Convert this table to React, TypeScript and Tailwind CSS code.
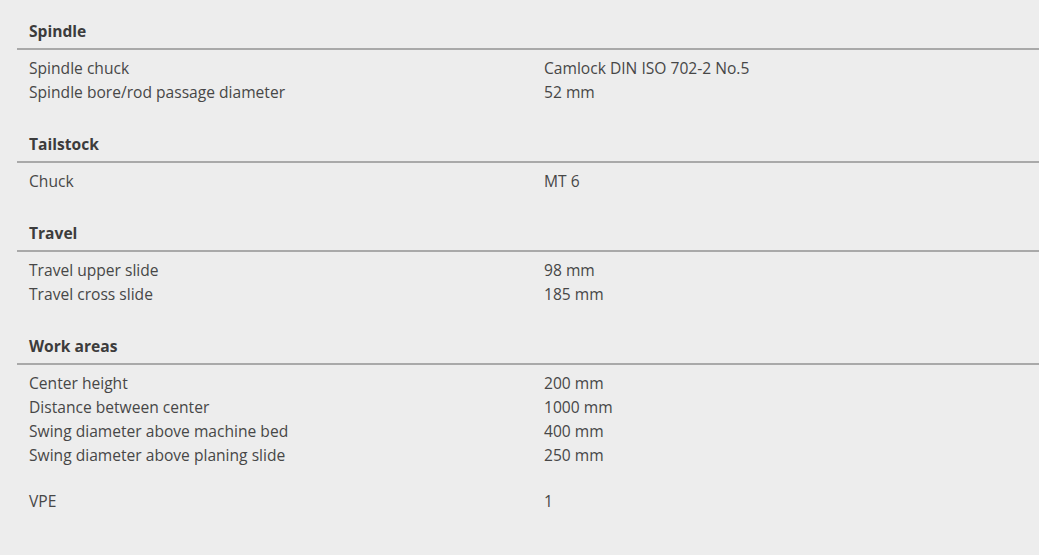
const groups: { title: string; rows: [string, string][] }[] = [
  {
    title: "Spindle",
    rows: [
      ["Spindle chuck", "Camlock DIN ISO 702-2 No.5"],
      ["Spindle bore/rod passage diameter", "52 mm"],
    ],
  },
  { title: "Tailstock", rows: [["Chuck", "MT 6"]] },
  {
    title: "Travel",
    rows: [
      ["Travel upper slide", "98 mm"],
      ["Travel cross slide", "185 mm"],
    ],
  },
  {
    title: "Work areas",
    rows: [
      ["Center height", "200 mm"],
      ["Distance between center", "1000 mm"],
      ["Swing diameter above machine bed", "400 mm"],
      ["Swing diameter above planing slide", "250 mm"],
    ],
  },
];

function Row({ label, value }: { label: string; value: string }) {
  return (
    <div className="grid grid-cols-[515px_1fr] px-3 leading-6">
      <span>{label}</span>
      <span>{value}</span>
    </div>
  );
}

export default function App() {
  return (
    <div
      className="min-h-[555px] bg-[#ededed] pl-[17px] pt-[19px] text-[15.6px] text-[#474747]"
      style={{ fontFamily: "'Open Sans', 'Noto Sans', sans-serif" }}
    >
      {groups.map((g, i) => (
        <section key={g.title} className={i > 0 ? "mt-[28.5px]" : ""}>
          <h3 className="border-b-2 border-[#a9a9a9] px-3 pb-[5px] font-bold leading-6 text-[#3c3c3c]">
            {g.title}
          </h3>
          <div className="mt-[5.5px]">
            {g.rows.map(([l, v]) => (
              <Row key={l} label={l} value={v} />
            ))}
          </div>
        </section>
      ))}
      <div className="mt-[22px]">
        <Row label="VPE" value="1" />
      </div>
    </div>
  );
}
